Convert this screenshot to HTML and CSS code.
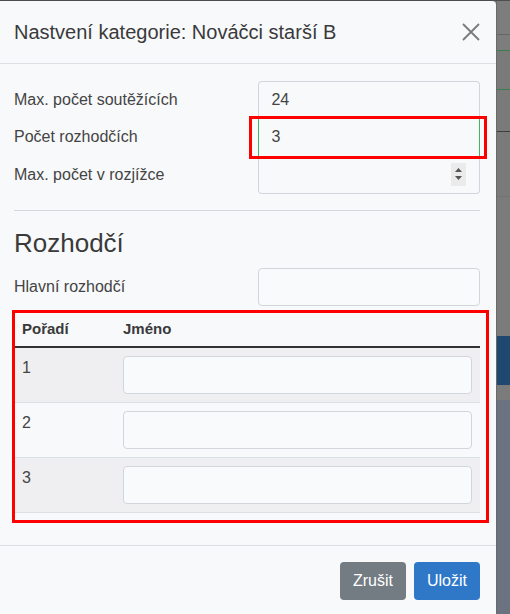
FILE: index.html
```html
<!DOCTYPE html>
<html lang="cs">
<head>
<meta charset="utf-8">
<title>Nastavení kategorie</title>
<link rel="stylesheet" href="styles.css">
</head>
<body>
<div class="page">
  <div class="modal">
    <div class="modal-header">
      <h5 class="modal-title">Nastvení kategorie: Nováčci starší B</h5>
      <button class="close" type="button" aria-label="Close">
        <svg width="18" height="18" viewBox="0 0 18 18"><path d="M1 1 L17 17 M17 1 L1 17" stroke="#7a7a7a" stroke-width="1.8" fill="none"/></svg>
      </button>
    </div>
    <div class="modal-body">
      <div class="form-grid">
        <div class="labels">
          <div class="lbl">Max. počet soutěžících</div>
          <div class="lbl">Počet rozhodčích</div>
          <div class="lbl">Max. počet v rozjížce</div>
        </div>
        <div class="stack">
          <div class="cell first">24</div>
          <div class="cell valid">3</div>
          <div class="cell last">
            <span class="spinner">
              <svg width="9" height="18" viewBox="0 0 9 18"><path d="M4.5 3 L8 7 L1 7 Z M1 11 L8 11 L4.5 15 Z" fill="#555"/></svg>
            </span>
          </div>
        </div>
      </div>
      <hr class="sep">
      <h3 class="section">Rozhodčí</h3>
      <div class="form-row">
        <div class="lbl">Hlavní rozhodčí</div>
        <div class="input"></div>
      </div>
      <table class="table">
        <thead>
          <tr><th class="c1">Pořadí</th><th>Jméno</th></tr>
        </thead>
        <tbody>
          <tr class="odd"><td class="c1">1</td><td><div class="input"></div></td></tr>
          <tr><td class="c1">2</td><td><div class="input"></div></td></tr>
          <tr class="odd"><td class="c1">3</td><td><div class="input"></div></td></tr>
        </tbody>
      </table>
    </div>
    <div class="modal-footer">
      <button class="btn btn-secondary" type="button">Zrušit</button>
      <button class="btn btn-primary" type="button">Uložit</button>
    </div>
    <div class="mark mark-a"></div>
    <div class="mark mark-b"></div>
  </div>
  <div class="backdrop">
    <div class="b b1"></div>
    <div class="b b2"></div>
    <div class="b b3"></div>
    <div class="b b4"></div>
    <div class="b b5"></div>
    <div class="b b6"></div>
    <div class="b b7"></div>
    <div class="b b8"></div>
    <div class="b b9"></div>
    <div class="b b10"></div>
    <div class="b b11"></div>
    <div class="b b12"></div>
    <div class="b b13"></div>
  </div>
</div>
</body>
</html>
```
FILE: styles.css
```css
* { box-sizing: border-box; }
html, body { margin: 0; padding: 0; }
body {
  font-family: "Liberation Sans", Arial, sans-serif;
  color: #3d3d3d;
  background: #7b7b7b;
  width: 510px;
  height: 614px;
  overflow: hidden;
}
.page {
  display: flex;
  height: 614px;
  border-top: 1px solid #4d4d4d;
}
.modal {
  position: relative;
  width: 496px;
  flex: none;
  background: #f8f9fb;
  border-top-right-radius: 4px;
  display: flex;
  flex-direction: column;
}
.modal-header {
  display: flex;
  align-items: center;
  justify-content: space-between;
  padding: 16px 14px 16px 14px;
  border-bottom: 1px solid #dcdfe4;
  height: 63px;
}
.modal-title {
  margin: 0;
  font-size: 20px;
  font-weight: normal;
  color: #3a3a3a;
  line-height: 30px;
}
.close {
  border: 0;
  background: none;
  padding: 0;
  margin-right: 2px;
  width: 18px;
  height: 18px;
  display: flex;
}
.modal-body {
  padding: 16px 16px 0 14px;
}
.form-grid {
  display: flex;
  padding-top: 1px;
}
.labels {
  width: 245px;
  display: flex;
  flex-direction: column;
}
.lbl {
  height: 37.5px;
  display: flex;
  align-items: center;
  font-size: 16px;
  color: #444;
}
.stack {
  width: 222px;
  display: flex;
  flex-direction: column;
}
.cell {
  height: 37.5px;
  display: flex;
  align-items: center;
  padding: 0 12px;
  font-size: 16px;
  color: #444;
  border-left: 1px solid #d2d6dc;
  border-right: 1px solid #d2d6dc;
}
.cell.first {
  border-top: 1px solid #d2d6dc;
  border-radius: 4px 4px 0 0;
}
.cell.valid {
  border-left-color: #3cb764;
  border-right-color: #3cb764;
}
.cell.last {
  border-bottom: 1px solid #d2d6dc;
  border-radius: 0 0 4px 4px;
  justify-content: flex-end;
  padding-right: 13px;
}
.spinner {
  width: 15px;
  height: 23px;
  background: #ebebeb;
  display: flex;
  align-items: center;
  justify-content: center;
}
.sep {
  border: 0;
  border-top: 1px solid #d5d8dc;
  margin: 16px 0 0 0;
  width: 466px;
}
.section {
  margin: 15px 0 8px 0;
  font-size: 26px;
  font-weight: normal;
  line-height: 34px;
  color: #3a3a3a;
}
.form-row {
  display: flex;
  align-items: center;
}
.form-row .lbl {
  width: 245px;
  height: 38px;
}
.input {
  height: 38px;
  width: 222px;
  border: 1px solid #d2d6dc;
  border-radius: 4px;
  background: #f9fafc;
}
.table {
  margin-top: 6px;
  width: 466px;
  border-collapse: collapse;
  font-size: 16px;
}
.table th {
  text-align: left;
  font-weight: bold;
  font-size: 15px;
  color: #3a3a3a;
  padding: 8px 8px 8px 8px;
  height: 35px;
  border-bottom: 2px solid #333;
}
.table th.c1, .table td.c1 { width: 101px; }
.table td {
  padding: 8px;
  border-top: 1px solid #dcdfe3;
  border-bottom: 1px solid #dcdfe3;
  vertical-align: top;
  line-height: 24px;
  color: #444;
}
.table td .input { width: 349px; }
.table tr.odd td { background: #efeff1; }
.modal-footer {
  margin-top: 32px;
  border-top: 1px solid #dcdfe4;
  padding: 16px 16px 16px 16px;
  display: flex;
  justify-content: flex-end;
  gap: 8px;
}
.btn {
  height: 38px;
  width: 66px;
  border: 0;
  border-radius: 4px;
  color: #fff;
  font-family: "Liberation Sans", Arial, sans-serif;
  font-size: 16px;
  padding: 0;
}
.btn-secondary { background: #737b83; }
.btn-primary { background: #2f78c8; }
.mark {
  position: absolute;
  border: 3px solid #ff0000;
  pointer-events: none;
}
.mark-a { left: 249px; top: 115px; width: 238px; height: 43px; }
.mark-b { left: 12px; top: 309px; width: 477px; height: 213px; }
.backdrop {
  flex: 1;
  display: flex;
  flex-direction: column;
  border-left: 1px solid #6a6a6a;
}
.b { flex: none; }
.b1 { height: 33px; background: #7d7d7d; }
.b2 { height: 1px; background: #666; }
.b3 { height: 15px; background: #7d7d7d; }
.b4 { height: 1px; background: #3c7d4d; }
.b5 { height: 38px; background: #7a7a7a; }
.b6 { height: 1px; background: #3c7d4d; }
.b7 { height: 41px; background: #7a7a7a; }
.b8 { height: 1px; background: #3e3e3e; }
.b9 { height: 64px; background: #7a7a7a; }
.b10 { height: 140px; background: #7b7b7b; border-top: 1px solid #737373; }
.b11 { height: 49px; background: #1f4770; }
.b12 { height: 15px; background: #7b7b7b; }
.b13 { flex: 1; background: #6b7380; }
```
